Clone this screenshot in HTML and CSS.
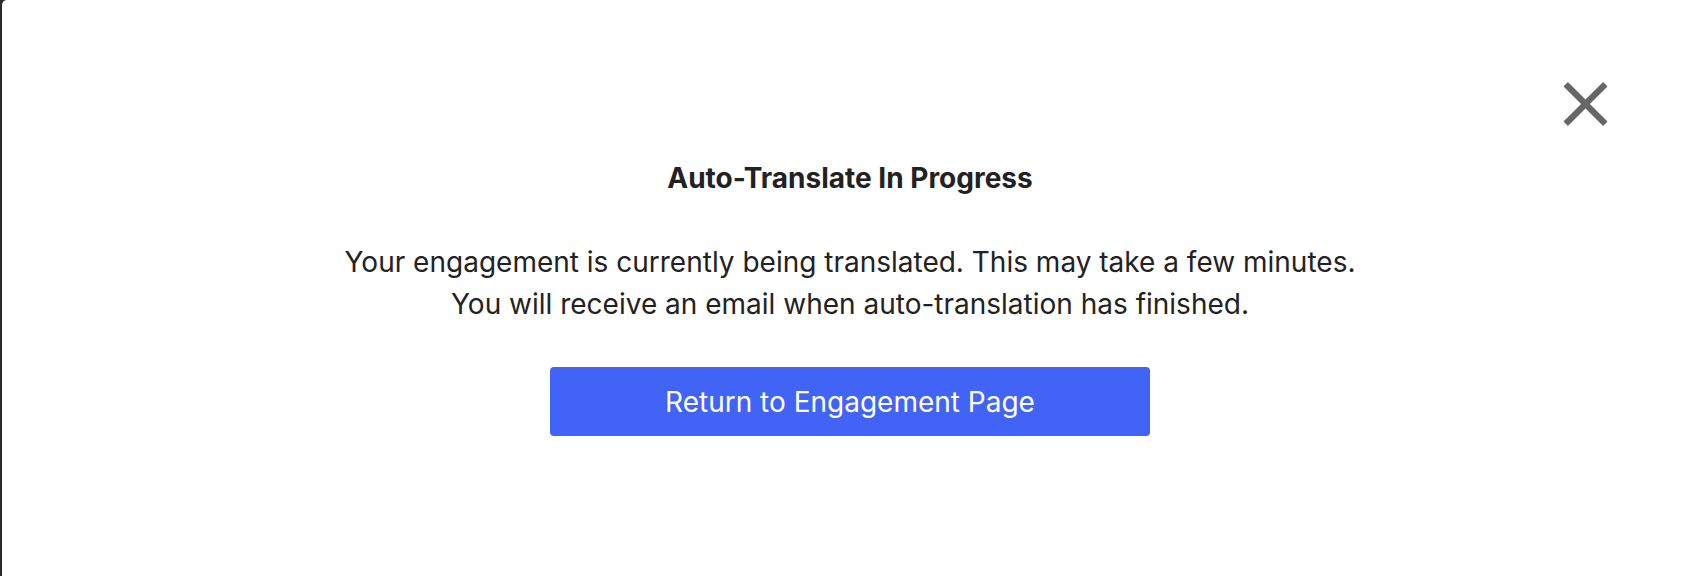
FILE: index.html
```html
<!DOCTYPE html>
<html lang="en">
<head>
    <meta charset="UTF-8">
    <meta name="viewport" content="width=device-width, initial-scale=1.0">
    <title>Auto-Translate In Progress</title>
    <link rel="stylesheet" href="styles.css">
</head>
<body>
    <div class="modal">
        <button class="close-button" type="button" aria-label="Close">
            <svg viewBox="5 5 14 14" width="45" height="44">
                <path d="M19 6.41L17.59 5 12 10.59 6.41 5 5 6.41 10.59 12 5 17.59 6.41 19 12 13.41 17.59 19 19 17.59 13.41 12z" fill="#666666"/>
            </svg>
        </button>
        <div class="modal-content">
            <h2>Auto-Translate In Progress</h2>
            <p class="message">
                Your engagement is currently being translated. This may take a few minutes.<br>
                You will receive an email when auto-translation has finished.
            </p>
            <button class="primary-button" type="button">Return to Engagement Page</button>
        </div>
    </div>
</body>
</html>
```

FILE: styles.css
```css
body {
    font-family: Inter, 'Noto Sans', sans-serif;
    background-color: #2a2a2a;
    margin: 0;
    padding: 0;
    height: 100vh;
    overflow: hidden;
}

.modal {
    position: relative;
    margin-left: 2px;
    height: 100%;
    background-color: #ffffff;
    border-top-left-radius: 5px;
}

.close-button {
    position: absolute;
    top: 82px;
    right: 82px;
    padding: 0;
    border: none;
    background: none;
    cursor: pointer;
    line-height: 0;
}

.modal-content {
    display: flex;
    flex-direction: column;
    align-items: center;
    padding-top: 164px;
    padding-left: 8px;
    color: #222222;
}

h2 {
    margin: 0;
    font-size: 28px;
    font-weight: 700;
    line-height: 28px;
}

.message {
    margin: 49px 0 42px;
    font-size: 28px;
    line-height: 42px;
    text-align: center;
}

.primary-button {
    width: 600px;
    height: 69px;
    border: none;
    border-radius: 4px;
    background-color: #4264f6;
    color: #ffffff;
    font-family: inherit;
    font-size: 28px;
    cursor: pointer;
}
```
